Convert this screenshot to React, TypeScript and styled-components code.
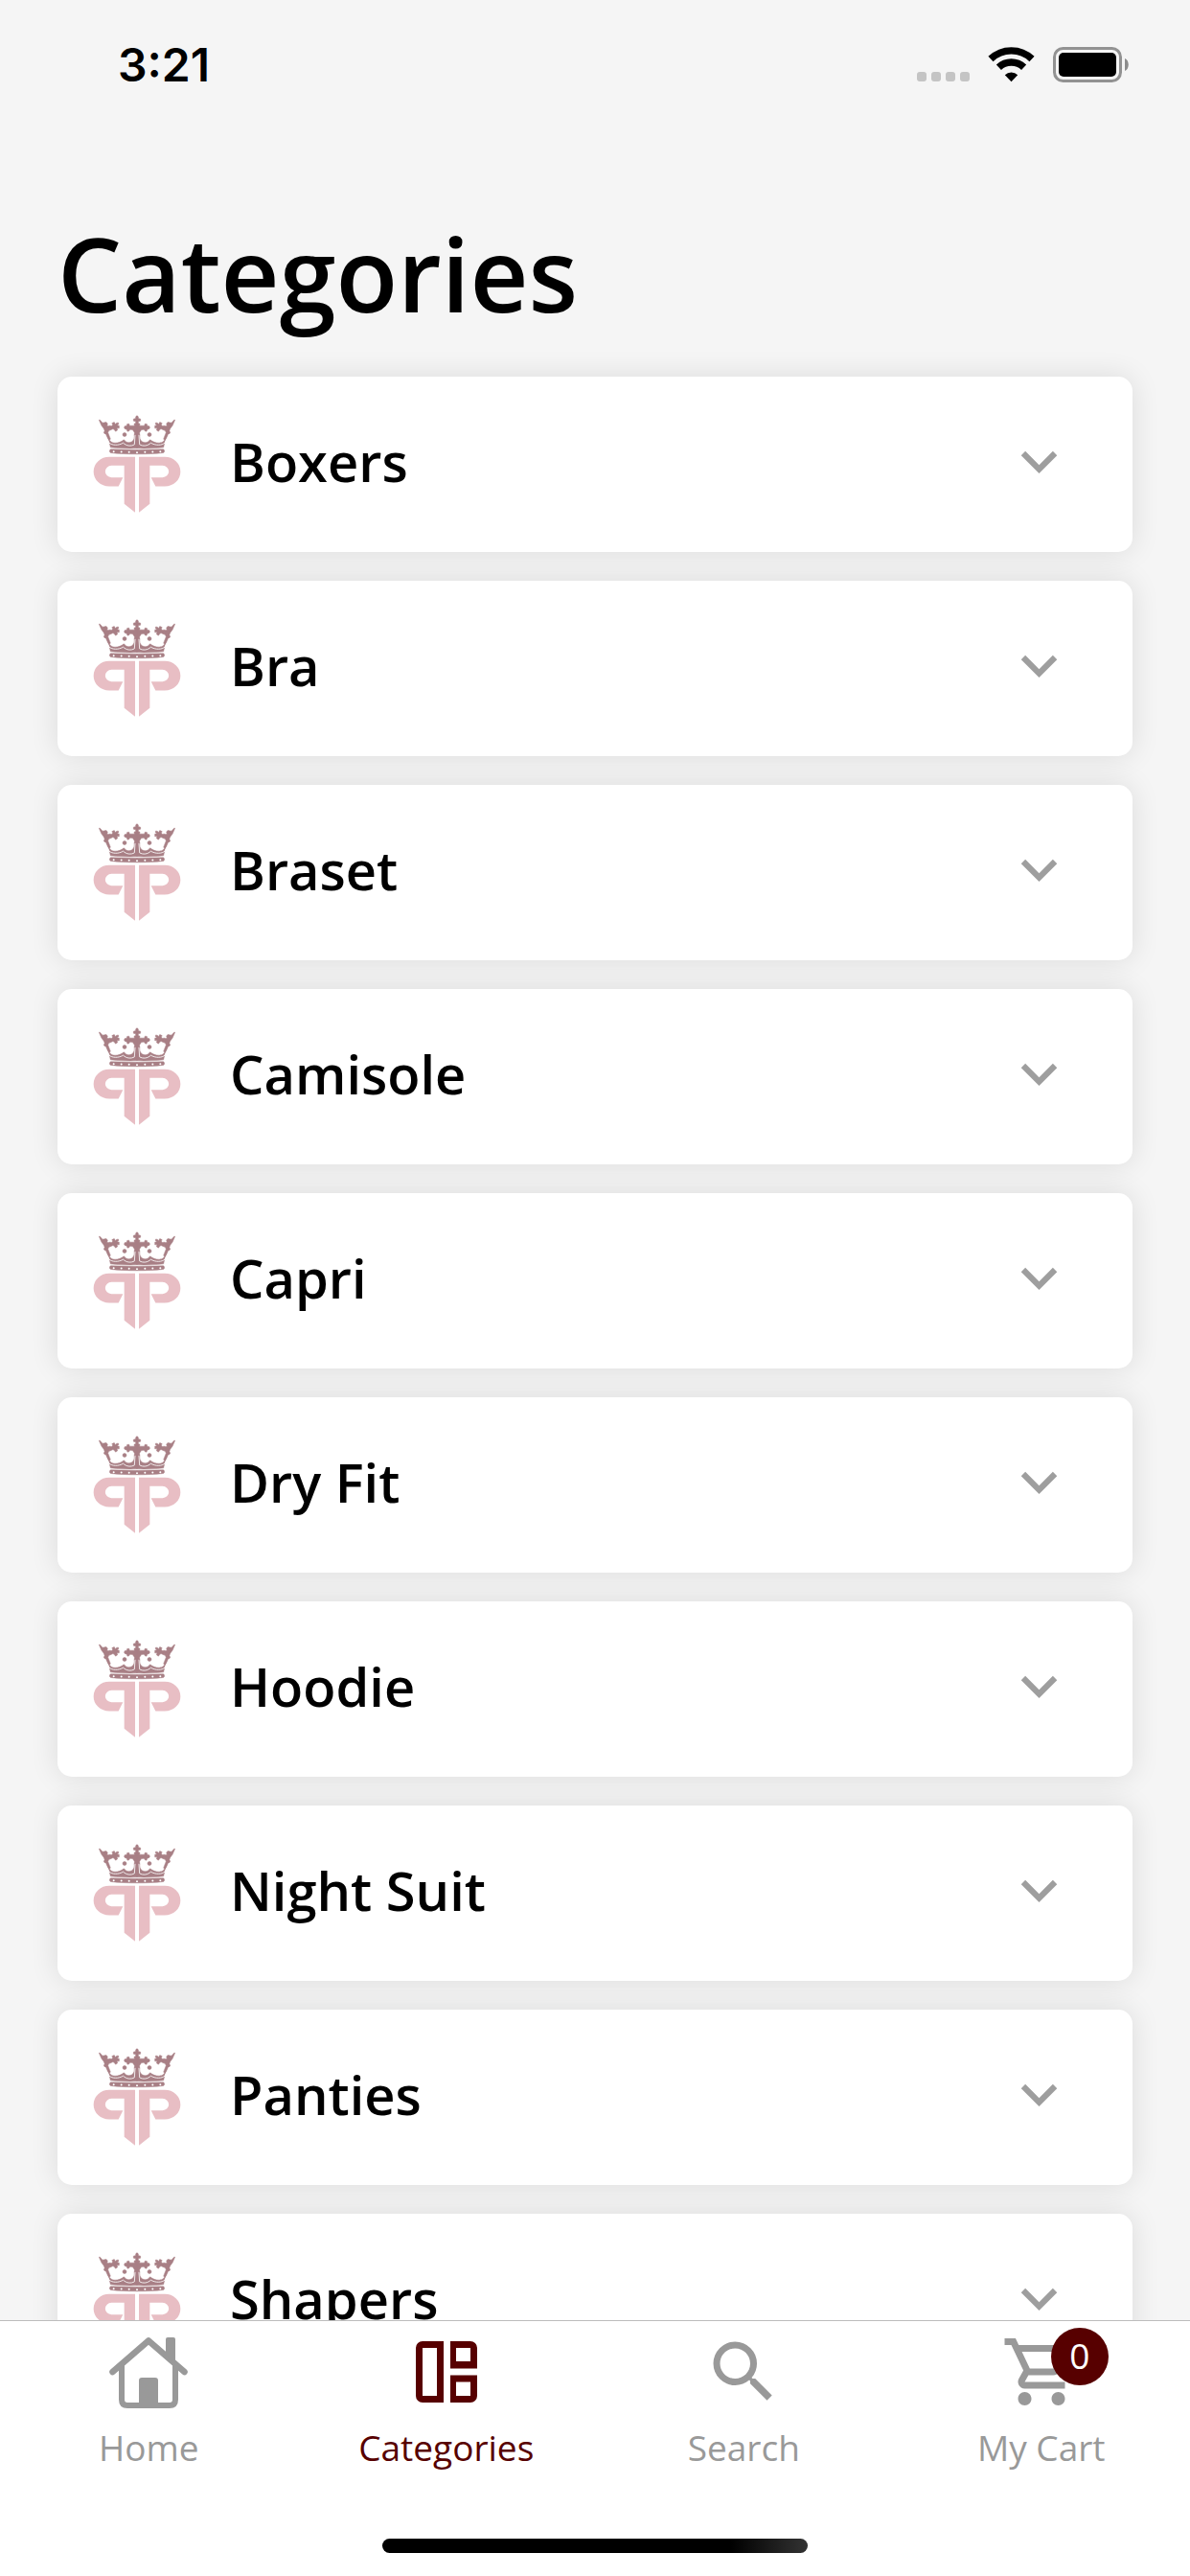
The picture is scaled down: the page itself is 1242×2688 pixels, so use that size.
import React, { useState } from "react";
import styled, { createGlobalStyle } from "styled-components";
import { MdExpandMore, MdOutlineShoppingCart, MdSearch } from "react-icons/md";

const ACTIVE = "#570000";
const MUTED = "#999999";

const GlobalStyle = createGlobalStyle`
  *, *::before, *::after { box-sizing: border-box; }
  body {
    margin: 0;
    background: #f5f5f5;
    color: #000;
    font-family: "Open Sans", "Noto Sans", sans-serif;
  }
  button { font: inherit; color: inherit; border: 0; background: none; padding: 0; cursor: pointer; }
`;

const Screen = styled.div`
  display: flex;
  flex-direction: column;
  height: 100vh;
  overflow: hidden;
`;

const StatusBar = styled.header`
  display: flex;
  flex: none;
  justify-content: space-between;
  height: 132px;
  padding: 38px 64px 0 123px;
`;

const Clock = styled.time`
  height: 60px;
  font: 600 48px/60px Inter, "Liberation Sans", sans-serif;
`;

const StatusIcons = styled.svg`
  width: 221px;
  height: 38px;
  margin-top: 10px;
`;

const Content = styled.main`
  flex: 1;
  min-height: 0;
  padding: 93px 60px 30px;
  overflow-y: auto;
  scrollbar-width: none;
`;

const Title = styled.h1`
  margin: 0 0 48px;
  font-size: 106px;
  font-weight: 600;
  line-height: 120px;
`;

const CategoryList = styled.ul`
  display: flex;
  flex-direction: column;
  gap: 30px;
  margin: 0;
  padding: 0;
  list-style: none;
`;

const CategoryCard = styled.button`
  display: flex;
  align-items: center;
  gap: 47px;
  width: 100%;
  height: 183px;
  padding: 0 60px 0 33px;
  border-radius: 15px;
  background: #fff;
  box-shadow: 0 0 30px rgba(0, 0, 0, 0.11);
  text-align: left;
`;

const CardBody = styled.span`
  display: flex;
  flex: 1;
  align-items: center;
  justify-content: space-between;
  padding-bottom: 7px;
`;

const CategoryName = styled.span`
  font-size: 56px;
  font-weight: 600;
  line-height: 72px;
`;

const Chevron = styled(MdExpandMore)<{ $open: boolean }>`
  width: 75px;
  height: 75px;
  color: #9e9e9e;
  rotate: ${(p) => (p.$open ? "180deg" : "0deg")};
`;

const LogoSvg = styled.svg`
  flex: none;
  width: 100px;
  height: 107px;
`;

const Footer = styled.footer`
  display: flex;
  flex: none;
  flex-direction: column;
  align-items: center;
  gap: 71px;
  padding: 11px 0 24px;
  border-top: 1px solid #bdbdbd;
  background: #fff;
`;

const TabBar = styled.nav`
  display: grid;
  grid-template-columns: repeat(4, 1fr);
  width: 100%;
`;

const Tab = styled.button<{ $active: boolean }>`
  display: flex;
  flex-direction: column;
  align-items: center;
  gap: 13px;
  && { color: ${(p) => (p.$active ? ACTIVE : MUTED)}; }
`;

const TabIcon = styled.span`
  position: relative;
  width: 84px;
  height: 84px;

  svg { display: block; width: 100%; height: 100%; }
`;

const TabLabel = styled.span`
  font-size: 37px;
  line-height: 48px;
`;

const Badge = styled.span`
  position: absolute;
  top: -4px;
  left: 52px;
  width: 60px;
  height: 60px;
  border-radius: 50%;
  background: ${ACTIVE};
  color: #fff;
  font-size: 37px;
  line-height: 58px;
  text-align: center;
`;

const HomeIndicator = styled.div`
  width: 36%;
  max-width: 444px;
  height: 15px;
  border-radius: 8px;
  background: linear-gradient(90deg, #000 82%, #333);
`;

const PhoneStatus = () => (
  <StatusIcons viewBox="0 0 221 38" role="img" aria-label="Wi-Fi on, battery full">
    {[0, 15, 30, 45].map((x) => (
      <rect key={x} x={x} y="27" width="10" height="10" rx="3" fill="#c4c4c4" />
    ))}
    <g fill="none" stroke="#000" strokeWidth="7.4">
      <path d="M77 13.5a31 31 0 0 1 43 0" />
      <path d="M85.400 22.300a19 19 0 0 1 26.200 0" />
    </g>
    <path d="M98.500 37.200 91.800 30.200a10 10 0 0 1 13.400 0z" fill="#000" />
    <rect x="143.500" y="2.500" width="69" height="34" rx="9" fill="none" stroke="#929292" strokeWidth="3" />
    <rect x="148" y="7" width="60" height="25" rx="5" fill="#000" />
    <path d="M217 13c5 2 5 11 0 13z" fill="#8c8c8c" />
  </StatusIcons>
);

const LogoHalf = () => (
  <>
    <path
      fill="#e8bec4"
      d="M182 201H101a49 46 0 0 0 0 92H130L144 265H108a19 18 0 0 1 0-37H148V348L182 375z"
    />
    <g fill="#a87f85" stroke="#a87f85" strokeWidth="1.500" strokeLinejoin="round">
      <path d="M69 85 72 85 80 94 92 92 96 97 94 103 101 105 104 111 100 119 97 124 105 145 99 148 92 133 84 112 77 103z" />
      <path d="M101 103 110 104 112 99 109 96 114 93 118 93 119 99 125 94 130 94 130 99 125 102 132 103 132 111 125 111 127 117 121 121 117 116 113 113 102 118z" />
      <circle cx="89" cy="124" r="4.500" />
      <circle cx="149" cy="131" r="6" />
      <path d="M188 72 184 75 184 80 177 82 177 88 184 90 184 95 179 97 180 103 165 103 163 97 157 98 156 103 149 105 148 110 150 113 156 115 158 121 163 120 166 115 174 116 180 124 180 136H188z" />
      <path d="M98 140C103 153 110 157 119 157 130 157 138 154 147 147 154 156 162 158 172 153 179 148 180 142 180 130H188V174C160 175 130 174 105 171z" />
      <path d="M188 179 106 177C101 178 101 187 106 188 130 191 160 192 188 192z" />
    </g>
    <path
      d="M93 142 101 157C110 165 130 166 145 157 154 167 170 168 180 162L182 132"
      fill="none"
      stroke="#fff"
      strokeWidth="2.500"
    />
    <g fill="#fff">
      <circle cx="115" cy="184" r="3" />
      <circle cx="139" cy="185" r="3" />
      <circle cx="163" cy="186" r="3" />
    </g>
  </>
);

const BrandLogo = () => (
  <LogoSvg viewBox="38 64 300 320" aria-hidden="true">
    <LogoHalf />
    <g transform="matrix(-1 0 0 1 376 0)">
      <LogoHalf />
    </g>
    <circle cx="188" cy="187" r="3" fill="#fff" />
  </LogoSvg>
);

const HomeIcon = () => (
  <svg viewBox="0 0 84 84" aria-hidden="true">
    <g fill="none" stroke="currentColor" strokeLinecap="round" strokeLinejoin="round">
      <path d="M4.500 42 42 9.500 79.500 42" strokeWidth="6.500" />
      <path d="M14 36V71q0 6 6 6H64q6 0 6-6V36" strokeWidth="6" />
    </g>
    <path d="M60 8q0-2 2-2h6q2 0 2 2V34L60 25z" fill="currentColor" />
    <path d="M32 77V51q0-3 3-3H49q3 0 3 3V77z" fill="currentColor" />
  </svg>
);

const CategoriesIcon = () => (
  <svg viewBox="0 0 84 84" aria-hidden="true">
    <path
      fill="currentColor"
      fillRule="evenodd"
      d="M17 10H39V74H17a7 7 0 0 1-7-7V17a7 7 0 0 1 7-7zM17 17V67H32V17zM46 10H67a7 7 0 0 1 7 7V38.500H46zM52 17V31H67V17zM46 45.500H74V67a7 7 0 0 1-7 7H46zM52 52.500V67H67V52.500z"
    />
  </svg>
);

const categories = [
  "Boxers",
  "Bra",
  "Braset",
  "Camisole",
  "Capri",
  "Dry Fit",
  "Hoodie",
  "Night Suit",
  "Panties",
  "Shapers",
];

const tabs = [
  { label: "Home", icon: <HomeIcon /> },
  { label: "Categories", icon: <CategoriesIcon /> },
  { label: "Search", icon: <MdSearch aria-hidden="true" /> },
  { label: "My Cart", icon: <MdOutlineShoppingCart aria-hidden="true" />, count: 0 },
];

export default function App() {
  const [openCategory, setOpenCategory] = useState<string | null>(null);
  const [activeTab, setActiveTab] = useState("Categories");

  return (
    <Screen>
      <GlobalStyle />
      <StatusBar>
        <Clock>3:21</Clock>
        <PhoneStatus />
      </StatusBar>
      <Content>
        <Title>Categories</Title>
        <CategoryList>
          {categories.map((name) => {
            const open = openCategory === name;
            return (
              <li key={name}>
                <CategoryCard
                  type="button"
                  aria-expanded={open}
                  onClick={() => setOpenCategory(open ? null : name)}
                >
                  <BrandLogo />
                  <CardBody>
                    <CategoryName>{name}</CategoryName>
                    <Chevron $open={open} aria-hidden="true" />
                  </CardBody>
                </CategoryCard>
              </li>
            );
          })}
        </CategoryList>
      </Content>
      <Footer>
        <TabBar aria-label="Main">
          {tabs.map(({ label, icon, count }) => (
            <Tab
              key={label}
              type="button"
              $active={activeTab === label}
              aria-current={activeTab === label ? "page" : undefined}
              onClick={() => setActiveTab(label)}
            >
              <TabIcon>
                {icon}
                {count !== undefined && <Badge>{count}</Badge>}
              </TabIcon>
              <TabLabel>{label}</TabLabel>
            </Tab>
          ))}
        </TabBar>
        <HomeIndicator />
      </Footer>
    </Screen>
  );
}
